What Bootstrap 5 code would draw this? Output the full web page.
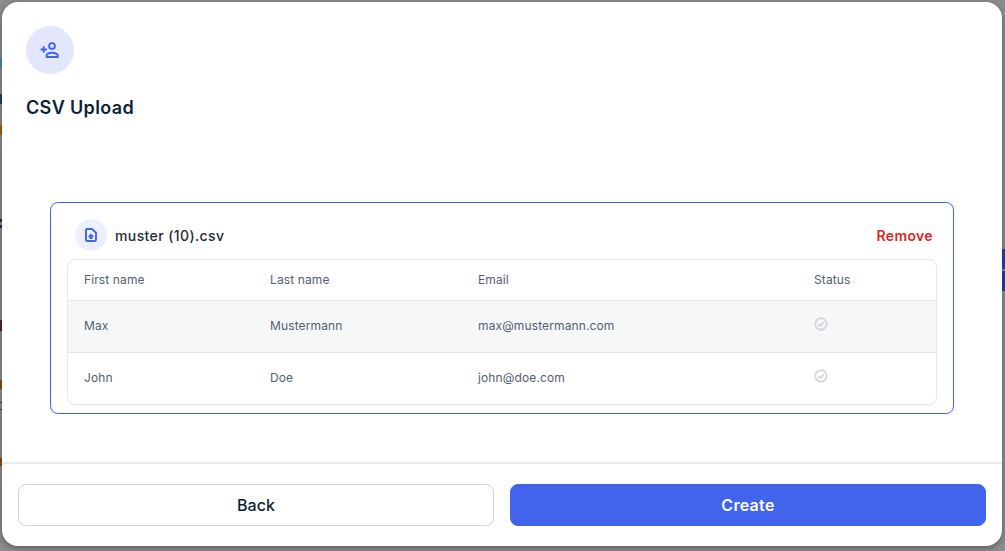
<!doctype html>
<html lang="en"><head><meta charset="utf-8"><title>CSV Upload</title>
<link href="https://cdn.jsdelivr.net/npm/bootstrap@5.3.0/dist/css/bootstrap.min.css" rel="stylesheet">
<style>
html,body{height:100%;overflow:hidden}
body{background:#8c8c8c;font-family:Inter,"Liberation Sans",sans-serif;color:#0b1f3a;position:relative}
.sliver{position:absolute;left:0;width:2px}
.sliver-r{position:absolute;right:0;width:3px;height:20px;background:#2a3f9e}
.dlg{position:absolute;left:2px;top:2px;width:1000px;height:544px;background:#fff;border-radius:16px;box-shadow:0 2px 6px rgba(0,0,0,.35);display:flex;flex-direction:column}
.dlg-head{padding:24px 24px 0;height:200px;flex:none}
.circle-a{width:48px;height:48px;border-radius:50%;background:#e2e7fd}
.dlg-title{font-size:18px;font-weight:600;line-height:24px;margin:22px 0 0;color:#0b1f3a;letter-spacing:.35px}
.file-box{width:904px;height:212px;margin:0 auto 0 48px;border:1px solid #4263eb;border-radius:8px;padding:16px 16px 8px}
.file-row{height:32px;margin-bottom:8px;padding-left:8px}
.circle-b{width:32px;height:32px;border-radius:50%;background:#ecf0fe}
.file-name{font-size:14px;font-weight:500;color:#1f2a3a;margin-left:8px;letter-spacing:.4px}
.remove-link{font-size:14px;font-weight:600;color:#d92626;text-decoration:none;margin-right:4px;letter-spacing:.35px}
.tbl-wrap{border:1px solid #e5e7eb;border-radius:8px;overflow:hidden;box-shadow:0 1px 2px rgba(16,24,40,.04);height:146px}
.tbl-inner{margin:0;table-layout:fixed;width:100%;font-size:12px;--bs-table-bg:transparent}
.tbl-inner td,.tbl-inner th{padding:0 0 0 16px;vertical-align:middle;font-weight:400;border-bottom:1px solid #e5e7eb;letter-spacing:.12px;color:#535e72;box-shadow:none}
.tbl-inner thead tr{height:40px}
.tbl-inner thead th{padding-top:1px}
.tbl-inner tbody tr{height:52px}
.tbl-inner tbody tr:last-child td{border-bottom:0}
.tbl-inner tbody tr.shade td{background:#f6f7f9}
.dlg-foot{margin-top:auto;border-top:2px solid #e9eaee;padding:20px 16px 20px;gap:16px;display:flex}
.btn-back,.btn-make{flex:1 1 0;height:42px;border-radius:8px;font-size:16px;font-weight:600;padding:0}
.btn-back{background:#fff;border:1px solid #d0d5dd;color:#0b1f3a;font-weight:500}
.btn-make{background:#4263eb;border:1px solid #4263eb;color:#fff;letter-spacing:.3px}
.tick{display:block;margin:-4px 0 0 0}
</style></head>
<body>
<span class="sliver" style="top:58px;height:10px;background:#4f86b5"></span>
<span class="sliver" style="top:94px;height:10px;background:#2b3d63"></span>
<span class="sliver" style="top:125px;height:10px;background:#a85f0c"></span>
<span class="sliver" style="top:219px;height:3px;background:#20304f"></span>
<span class="sliver" style="top:225px;height:3px;background:#20304f"></span>
<span class="sliver" style="top:320px;height:11px;background:#5c1f2e"></span>
<span class="sliver" style="top:380px;height:9px;background:#8a4a14"></span>
<span class="sliver" style="top:402px;height:1px;background:#444"></span>
<span class="sliver" style="top:409px;height:1px;background:#444"></span>
<span class="sliver" style="top:458px;height:8px;background:#8a4a14"></span>
<span class="sliver-r" style="top:249px"></span>
<span class="sliver-r" style="top:271px"></span>

<div class="dlg">
  <div class="dlg-head">
    <div class="circle-a d-flex align-items-center justify-content-center">
      <svg width="20" height="16" viewBox="0 0 20 16" fill="none" stroke="#4263eb" stroke-width="1.9">
        <circle cx="12" cy="4" r="2.900"/>
        <path d="M6.500 15v-.6c0-2.400 2.500-3.600 5.500-3.600s6 1.200 6 3.600v.6z" stroke-linejoin="round"/>
        <path d="M0.500 7.500h6.500M3.700 4.200v6.600"/>
      </svg>
    </div>
    <h1 class="dlg-title">CSV Upload</h1>
  </div>
  <div class="file-box">
    <div class="file-row d-flex align-items-center justify-content-between">
      <div class="d-flex align-items-center">
        <div class="circle-b d-flex align-items-center justify-content-center">
          <svg width="12" height="14" viewBox="0 0 12 14" fill="none">
            <path d="M2 1h5l4 3.800v7A1.200 1.200 0 0 1 9.800 13H2A1.200 1.200 0 0 1 1 11.800V2.200A1.200 1.200 0 0 1 2 1z" stroke="#4263eb" stroke-width="1.900" stroke-linejoin="round"/>
            <path d="M6 5.500 9.200 8.700H7.500V11h-3V8.700H2.800z" fill="#4263eb"/>
          </svg>
        </div>
        <span class="file-name">muster (10).csv</span>
      </div>
      <a href="#" class="remove-link">Remove</a>
    </div>
    <div class="tbl-wrap">
      <table class="table tbl-inner">
        <colgroup><col style="width:186px"><col style="width:208px"><col style="width:336px"><col></colgroup>
        <thead><tr><th>First name</th><th>Last name</th><th>Email</th><th>Status</th></tr></thead>
        <tbody>
          <tr class="shade"><td>Max</td><td>Mustermann</td><td>max@mustermann.com</td><td><svg class="tick" width="14" height="14" viewBox="0 0 14 14" fill="none" stroke="#d4d7de" stroke-width="1.900"><circle cx="7" cy="7" r="5.700"/><path d="M4.300 7.200 6.200 9l3.500-3.600"/></svg></td></tr>
          <tr><td>John</td><td>Doe</td><td>john@doe.com</td><td><svg class="tick" width="14" height="14" viewBox="0 0 14 14" fill="none" stroke="#d4d7de" stroke-width="1.900"><circle cx="7" cy="7" r="5.700"/><path d="M4.300 7.200 6.200 9l3.500-3.600"/></svg></td></tr>
        </tbody>
      </table>
    </div>
  </div>
  <div class="dlg-foot">
    <button type="button" class="btn btn-back">Back</button>
    <button type="button" class="btn btn-make">Create</button>
  </div>
</div>
</body></html>
